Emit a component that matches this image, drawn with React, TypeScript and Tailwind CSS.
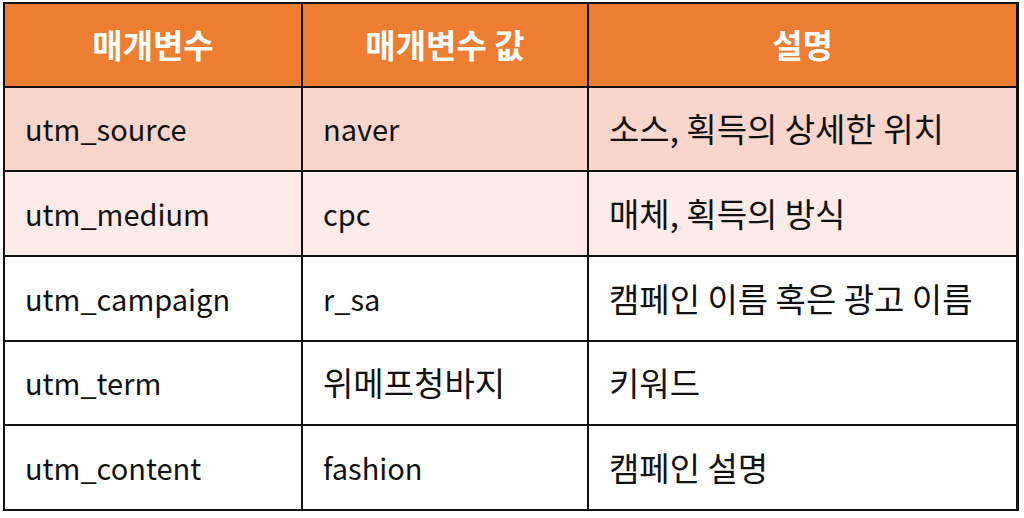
import React from "react";

type Cell = { t: string; ko?: boolean };

const rows: Cell[][] = [
  [{ t: "utm_source" }, { t: "naver" }, { t: "소스, 획득의 상세한 위치", ko: true }],
  [{ t: "utm_medium" }, { t: "cpc" }, { t: "매체, 획득의 방식", ko: true }],
  [{ t: "utm_campaign" }, { t: "r_sa" }, { t: "캠페인 이름 혹은 광고 이름", ko: true }],
  [{ t: "utm_term" }, { t: "위메프청바지", ko: true }, { t: "키워드", ko: true }],
  [{ t: "utm_content" }, { t: "fashion" }, { t: "캠페인 설명", ko: true }],
];

const rowBg = ["bg-[#f8d6cc]", "bg-[#fcebe6]", "bg-white", "bg-white", "bg-white"];

export default function App() {
  return (
    <div
      className="w-[1024px] h-[518px] bg-white pt-[2px] pl-[3px]"
      style={{ fontFamily: '"Noto Sans CJK KR", "Noto Sans", sans-serif' }}
    >
      <div className="w-[1016px] grid grid-cols-[296px_284px_427px] grid-rows-[82px_82px_83px_83px_82px_83px] gap-[2px] p-[2px] bg-[#111]">
        {["매개변수", "매개변수 값", "설명"].map((h) => (
          <div
            key={h}
            className="bg-[#ed7d31] text-white font-bold text-[33px] flex items-center justify-center"
          >
            {h}
          </div>
        ))}
        {rows.map((r, i) =>
          r.map((c, j) => (
            <div
              key={`${i}-${j}`}
              className={`${rowBg[i]} text-[#111] ${c.ko ? "text-[33px]" : "text-[29px]"} flex items-center pl-[20px]`}
            >
              {c.t}
            </div>
          ))
        )}
      </div>
    </div>
  );
}
